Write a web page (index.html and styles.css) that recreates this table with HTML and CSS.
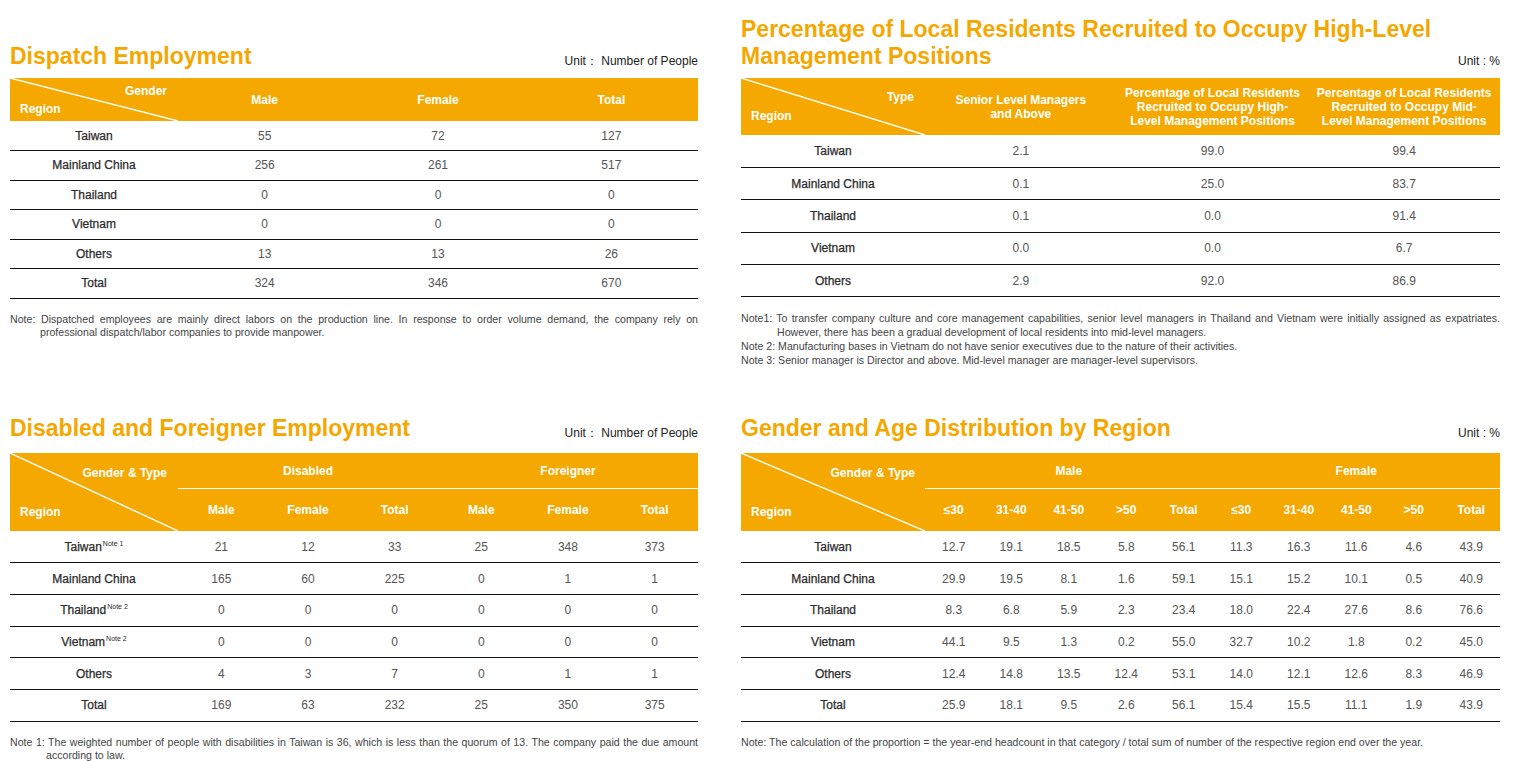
FILE: index.html
```html
<!DOCTYPE html>
<html lang="en">
<head>
<meta charset="utf-8">
<title>Employment Tables</title>
<link rel="stylesheet" href="styles.css">
</head>
<body>
<div class="page">
  <header class="sec-head">
    <h2 class="title">Dispatch Employment</h2>
    <span class="unit">Unit：&nbsp;Number of People</span>
  </header>
  <header class="sec-head">
    <h2 class="title">Percentage of Local Residents Recruited to Occupy High-Level<br>Management Positions</h2>
    <span class="unit">Unit : %</span>
  </header>

  <section class="block">
    <table class="tbl t1">
      <colgroup><col class="c-reg-l"><col><col><col></colgroup>
      <thead>
        <tr>
          <th class="diag">
            <svg class="diag-line" viewBox="0 0 100 100" preserveAspectRatio="none"><line x1="0" y1="0" x2="100" y2="100"/></svg>
            <div class="diag-labels"><span class="d-top">Gender</span><span class="d-bot">Region</span></div>
          </th>
          <th>Male</th><th>Female</th><th>Total</th>
        </tr>
      </thead>
      <tbody>
        <tr><td class="rg">Taiwan</td><td>55</td><td>72</td><td>127</td></tr>
        <tr><td class="rg">Mainland China</td><td>256</td><td>261</td><td>517</td></tr>
        <tr><td class="rg">Thailand</td><td>0</td><td>0</td><td>0</td></tr>
        <tr><td class="rg">Vietnam</td><td>0</td><td>0</td><td>0</td></tr>
        <tr><td class="rg">Others</td><td>13</td><td>13</td><td>26</td></tr>
        <tr><td class="rg">Total</td><td>324</td><td>346</td><td>670</td></tr>
      </tbody>
    </table>
    <p class="note hang30">Note: Dispatched employees are mainly direct labors on the production line. In response to order volume demand, the company rely on professional dispatch/labor companies to provide manpower.</p>
  </section>

  <section class="block">
    <table class="tbl t2">
      <colgroup><col class="c-reg-r"><col><col><col></colgroup>
      <thead>
        <tr>
          <th class="diag">
            <svg class="diag-line" viewBox="0 0 100 100" preserveAspectRatio="none"><line x1="0" y1="0" x2="100" y2="100"/></svg>
            <div class="diag-labels"><span class="d-top">Type</span><span class="d-bot">Region</span></div>
          </th>
          <th>Senior Level Managers<br>and Above</th>
          <th>Percentage of Local Residents<br>Recruited to Occupy High-<br>Level Management Positions</th>
          <th>Percentage of Local Residents<br>Recruited to Occupy Mid-<br>Level Management Positions</th>
        </tr>
      </thead>
      <tbody>
        <tr><td class="rg">Taiwan</td><td>2.1</td><td>99.0</td><td>99.4</td></tr>
        <tr><td class="rg">Mainland China</td><td>0.1</td><td>25.0</td><td>83.7</td></tr>
        <tr><td class="rg">Thailand</td><td>0.1</td><td>0.0</td><td>91.4</td></tr>
        <tr><td class="rg">Vietnam</td><td>0.0</td><td>0.0</td><td>6.7</td></tr>
        <tr><td class="rg">Others</td><td>2.9</td><td>92.0</td><td>86.9</td></tr>
      </tbody>
    </table>
    <div class="notes">
      <p class="note hang36">Note1: To transfer company culture and core management capabilities, senior level managers in Thailand and Vietnam were initially assigned as expatriates. However, there has been a gradual development of local residents into mid-level managers.</p>
      <p class="note">Note 2: Manufacturing bases in Vietnam do not have senior executives due to the nature of their activities.</p>
      <p class="note">Note 3: Senior manager is Director and above. Mid-level manager are manager-level supervisors.</p>
    </div>
  </section>

  <header class="sec-head low">
    <h2 class="title">Disabled and Foreigner Employment</h2>
    <span class="unit">Unit：&nbsp;Number of People</span>
  </header>
  <header class="sec-head low">
    <h2 class="title">Gender and Age Distribution by Region</h2>
    <span class="unit">Unit : %</span>
  </header>

  <section class="block">
    <table class="tbl t3">
      <colgroup><col class="c-reg-l"><col><col><col><col><col><col></colgroup>
      <thead>
        <tr class="h1">
          <th class="diag" rowspan="2">
            <svg class="diag-line" viewBox="0 0 100 100" preserveAspectRatio="none"><line x1="0" y1="0" x2="100" y2="100"/></svg>
            <div class="diag-labels"><span class="d-top">Gender &amp; Type</span><span class="d-bot">Region</span></div>
          </th>
          <th class="grp" colspan="3">Disabled</th>
          <th class="grp" colspan="3">Foreigner</th>
        </tr>
        <tr class="h2">
          <th>Male</th><th>Female</th><th>Total</th><th>Male</th><th>Female</th><th>Total</th>
        </tr>
      </thead>
      <tbody>
        <tr><td class="rg">Taiwan<sup class="nt">Note 1</sup></td><td>21</td><td>12</td><td>33</td><td>25</td><td>348</td><td>373</td></tr>
        <tr><td class="rg">Mainland China</td><td>165</td><td>60</td><td>225</td><td>0</td><td>1</td><td>1</td></tr>
        <tr><td class="rg">Thailand<sup class="nt">Note 2</sup></td><td>0</td><td>0</td><td>0</td><td>0</td><td>0</td><td>0</td></tr>
        <tr><td class="rg">Vietnam<sup class="nt">Note 2</sup></td><td>0</td><td>0</td><td>0</td><td>0</td><td>0</td><td>0</td></tr>
        <tr><td class="rg">Others</td><td>4</td><td>3</td><td>7</td><td>0</td><td>1</td><td>1</td></tr>
        <tr><td class="rg">Total</td><td>169</td><td>63</td><td>232</td><td>25</td><td>350</td><td>375</td></tr>
      </tbody>
    </table>
    <p class="note hang36">Note 1: The weighted number of people with disabilities in Taiwan is 36, which is less than the quorum of 13. The company paid the due amount according to law.</p>
  </section>

  <section class="block">
    <table class="tbl t4">
      <colgroup><col class="c-reg-r"><col><col><col><col><col><col><col><col><col><col></colgroup>
      <thead>
        <tr class="h1">
          <th class="diag" rowspan="2">
            <svg class="diag-line" viewBox="0 0 100 100" preserveAspectRatio="none"><line x1="0" y1="0" x2="100" y2="100"/></svg>
            <div class="diag-labels"><span class="d-top">Gender &amp; Type</span><span class="d-bot">Region</span></div>
          </th>
          <th class="grp" colspan="5">Male</th>
          <th class="grp" colspan="5">Female</th>
        </tr>
        <tr class="h2">
          <th>≤30</th><th>31-40</th><th>41-50</th><th>&gt;50</th><th>Total</th>
          <th>≤30</th><th>31-40</th><th>41-50</th><th>&gt;50</th><th>Total</th>
        </tr>
      </thead>
      <tbody>
        <tr><td class="rg">Taiwan</td><td>12.7</td><td>19.1</td><td>18.5</td><td>5.8</td><td>56.1</td><td>11.3</td><td>16.3</td><td>11.6</td><td>4.6</td><td>43.9</td></tr>
        <tr><td class="rg">Mainland China</td><td>29.9</td><td>19.5</td><td>8.1</td><td>1.6</td><td>59.1</td><td>15.1</td><td>15.2</td><td>10.1</td><td>0.5</td><td>40.9</td></tr>
        <tr><td class="rg">Thailand</td><td>8.3</td><td>6.8</td><td>5.9</td><td>2.3</td><td>23.4</td><td>18.0</td><td>22.4</td><td>27.6</td><td>8.6</td><td>76.6</td></tr>
        <tr><td class="rg">Vietnam</td><td>44.1</td><td>9.5</td><td>1.3</td><td>0.2</td><td>55.0</td><td>32.7</td><td>10.2</td><td>1.8</td><td>0.2</td><td>45.0</td></tr>
        <tr><td class="rg">Others</td><td>12.4</td><td>14.8</td><td>13.5</td><td>12.4</td><td>53.1</td><td>14.0</td><td>12.1</td><td>12.6</td><td>8.3</td><td>46.9</td></tr>
        <tr><td class="rg">Total</td><td>25.9</td><td>18.1</td><td>9.5</td><td>2.6</td><td>56.1</td><td>15.4</td><td>15.5</td><td>11.1</td><td>1.9</td><td>43.9</td></tr>
      </tbody>
    </table>
    <p class="note">Note: The calculation of the proportion = the year-end headcount in that category / total sum of number of the respective region end over the year.</p>
  </section>
</div>
</body>
</html>
```

FILE: styles.css
```css
* { box-sizing: border-box; }

body {
  margin: 0;
  background: #ffffff;
  font-family: "Liberation Sans", Arial, sans-serif;
  color: #333;
}

.page {
  display: grid;
  grid-template-columns: 688px 759px;
  column-gap: 43px;
  padding: 16px 0 0 10px;
  align-items: start;
}

.sec-head {
  display: flex;
  justify-content: space-between;
  align-items: flex-end;
  gap: 10px;
  margin-bottom: 8px;
  align-self: end;
}

.sec-head.low {
  margin-top: 48px;
  margin-bottom: 11px;
}

.title {
  margin: 0;
  font-size: 23px;
  line-height: 27px;
  font-weight: 700;
  color: #f5a700;
}

.unit {
  font-size: 12px;
  line-height: 14px;
  color: #222;
  padding-bottom: 2px;
  white-space: nowrap;
}

.tbl {
  width: 100%;
  border-collapse: collapse;
  table-layout: fixed;
}

.c-reg-l { width: 168px; }
.c-reg-r { width: 184px; }

.tbl th {
  background: #f5a800;
  color: #fff;
  font-weight: 700;
  font-size: 12px;
  line-height: 14px;
  padding: 0;
  text-align: center;
  vertical-align: middle;
}

.tbl td {
  font-size: 12px;
  line-height: 14px;
  padding: 0;
  text-align: center;
  vertical-align: middle;
  color: #555;
  border-bottom: 1px solid #111;
}

.tbl td.rg {
  color: #2b2b2b;
  -webkit-text-stroke: 0.25px #2b2b2b;
}

.nt {
  font-size: 7px;
  line-height: 0;
  vertical-align: 5px;
  margin-left: 1px;
  -webkit-text-stroke: 0;
}

/* diagonal header cell */
.tbl th.diag {
  position: relative;
  padding: 0;
}

.diag-line {
  position: absolute;
  left: 0;
  top: 0;
  width: 100%;
  height: 100%;
}

.diag-line line {
  stroke: #fff;
  stroke-width: 1.4;
  vector-effect: non-scaling-stroke;
}

.diag-labels {
  display: flex;
  flex-direction: column;
  justify-content: space-between;
  font-weight: 700;
}

.d-top { align-self: flex-end; }
.d-bot { align-self: flex-start; }

/* table 1 */
.t1 thead tr { height: 43px; }
.t1 .diag-labels { height: 43px; padding: 6px 11px 5px 10px; }
.t1 tbody tr { height: 29.5px; }

/* table 2 */
.t2 thead tr { height: 57px; }
.t2 .diag-labels { height: 57px; padding: 12px 11px 12px 10px; }
.t2 tbody tr { height: 32.4px; }

/* tables 3 & 4 */
.t3 .h1, .t4 .h1 { height: 35px; }
.t3 .h2, .t4 .h2 { height: 43px; }
.tbl th.grp { border-bottom: 1px solid #fff; }
.t3 .diag-labels, .t4 .diag-labels { height: 78px; padding: 13px 11px 12px 10px; }
.t4 .diag-labels { padding-right: 10px; }
.t3 tbody tr, .t4 tbody tr { height: 31.67px; }

/* notes */
.notes { margin-top: 15px; }
.block > .note { margin-top: 14px; }

.note {
  margin: 0;
  font-size: 10.6px;
  line-height: 13.7px;
  color: #444;
  text-align: justify;
}

.hang30 { padding-left: 30px; text-indent: -30px; }
.hang36 { padding-left: 36px; text-indent: -36px; }
```
